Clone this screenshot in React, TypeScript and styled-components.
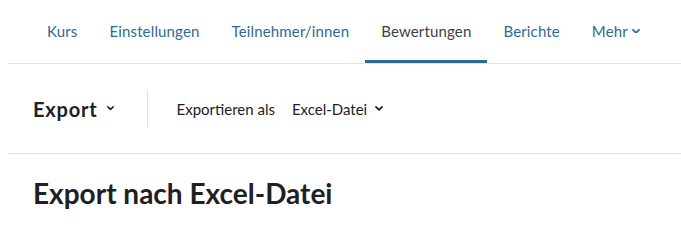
import React from 'react';
import styled, { createGlobalStyle } from 'styled-components';

const GlobalStyle = createGlobalStyle`
  body {
    margin: 0;
    background: #fff;
    font-family: Lato, 'Noto Sans', sans-serif;
    color: #1d2125;
  }
`;

const Page = styled.div`
  padding-left: 8px;
`;

const Nav = styled.ul`
  display: flex;
  margin: 0;
  padding: 0 0 0 23px;
  list-style: none;
  height: 63px;
  border-bottom: 1px solid #dee2e6;
`;

const NavItem = styled.li<{ $active?: boolean }>`
  display: flex;
  align-items: center;
  gap: 4px;
  padding: 2px 16px 0;
  height: 63px;
  box-sizing: border-box;
  font-size: 15px;
  letter-spacing: 0.15px;
  color: ${(p) => (p.$active ? '#3b4046' : '#2f6a93')};
  border-bottom: 3px solid ${(p) => (p.$active ? '#2d6a91' : 'transparent')};
  cursor: pointer;
`;

const Toolbar = styled.div`
  display: flex;
  align-items: center;
  height: 89px;
  padding-left: 25px;
  border-bottom: 1px solid #dee2e6;
`;

const ActionMenu = styled.div`
  display: flex;
  align-items: center;
  gap: 9px;
  font-size: 20px;
  font-weight: 700;
  letter-spacing: 0.8px;
  color: #1d2125;
`;

const Divider = styled.div`
  width: 1px;
  height: 37px;
  background: #dee2e6;
  margin: 0 29px 0 33px;
`;

const Label = styled.span`
  font-size: 15px;
  color: #1d2125;
  margin-right: 17px;
`;

const Select = styled.div`
  display: flex;
  align-items: center;
  gap: 8px;
  font-size: 15px;
  color: #1d2125;
`;

const Heading = styled.h2`
  margin: 0;
  padding: 23px 0 0 25px;
  font-size: 28px;
  font-weight: 700;
  line-height: 1.2;
  color: #1d2125;
`;

const Chevron = ({ size = 8 }: { size?: number }) => (
  <svg width={size} height={size * 0.6} viewBox="0 0 10 6" fill="none">
    <polyline
      points="1.2,1.2 5,4.8 8.8,1.2"
      stroke="currentColor"
      strokeWidth="2.2"
      strokeLinecap="round"
      strokeLinejoin="round"
    />
  </svg>
);

const items = ['Kurs', 'Einstellungen', 'Teilnehmer/innen', 'Bewertungen', 'Berichte'];

const App = () => {
  return (
    <Page>
      <GlobalStyle />
      <Nav>
        {items.map((item) => (
          <NavItem key={item} $active={item === 'Bewertungen'}>
            {item}
          </NavItem>
        ))}
        <NavItem>
          Mehr <Chevron size={8} />
        </NavItem>
      </Nav>
      <Toolbar>
        <ActionMenu>
          Export <Chevron size={7} />
        </ActionMenu>
        <Divider />
        <Label>Exportieren als</Label>
        <Select>
          Excel-Datei <Chevron size={8} />
        </Select>
      </Toolbar>
      <Heading>Export nach Excel-Datei</Heading>
    </Page>
  );
};

export default App;
